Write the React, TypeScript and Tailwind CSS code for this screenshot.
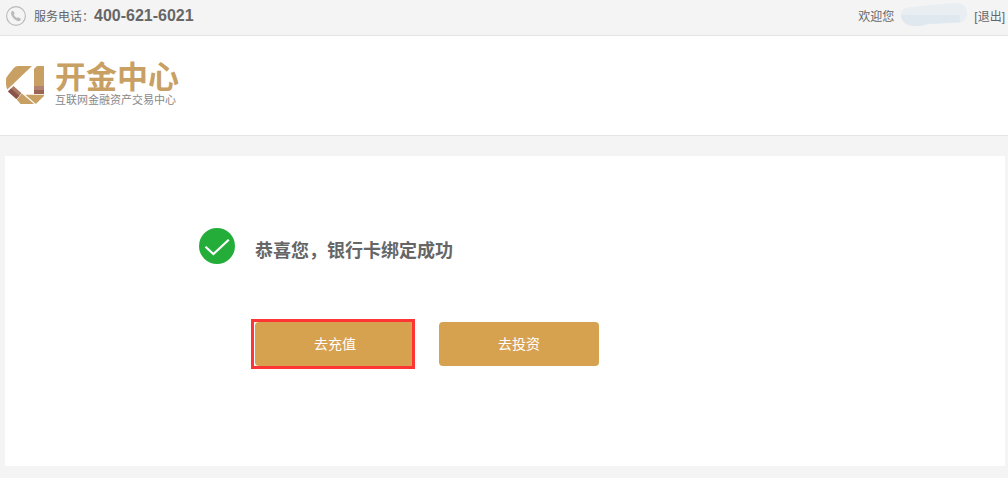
import React from "react";

function PhoneIcon() {
  return (
    <svg className="h-5 w-5 shrink-0" viewBox="0 0 20 20" aria-hidden="true">
      <circle cx="10" cy="10" r="9.4" fill="none" stroke="#b9b9b9" strokeWidth="1.1" />
      <path
        d="M6.3 5.1 L7.6 5.2 L8.7 7.4 L7.7 8.6 C8.3 10 9.5 11.3 10.9 12.1 L12.2 11.2 L14.7 12.7 L14.7 14 C14 15.2 12.4 15.3 11 14.7 C8.2 13.5 5.8 10.9 5.1 8.1 C4.8 6.8 5.3 5.6 6.3 5.1 Z"
        fill="#bababa"
      />
    </svg>
  );
}

function LogoMark() {
  return (
    <svg className="h-[38px] w-[38px] shrink-0" viewBox="0 0 38 38" aria-hidden="true">
      <path d="M12 0 H26 L1.4 23.6 Q0 21 0 18 V14 Q0 11.4 1.8 9.4 L7.6 2.2 Q9.4 0 12 0 Z" fill="#c8a063" />
      <path d="M7.5 20 L15.5 27.2 L10.4 33 L2 25.4 Z" fill="#a97762" />
      <path d="M5 22.6 L13.2 29.8 L10.4 33 L2 25.4 Z" fill="#8a5548" />
      <path d="M15.9 27.6 L28.2 38 H14.6 L10.8 33.4 Z" fill="#c8a063" />
      <path d="M31 0 H38 V20 H28 V3 Z" fill="#c8a063" />
      <path d="M28 20 H38 V24 H28 Z" fill="#b38270" />
      <path d="M28 24 H38 V28 H28 Z" fill="#9a6555" />
      <path d="M19.4 28.8 H38 V30 L29.8 38 Z" fill="#c8a063" />
    </svg>
  );
}

function SuccessIcon() {
  return (
    <svg className="h-9 w-9 shrink-0" viewBox="0 0 36 36" aria-hidden="true">
      <circle cx="18" cy="18" r="18" fill="#24ae39" />
      <path d="M6.5 18.8 L14.4 26 L29.8 11.8" fill="none" stroke="#fff" strokeWidth="2.2" />
    </svg>
  );
}

function HiddenName() {
  return (
    <svg className="h-6 w-[68px] shrink-0" viewBox="0 0 68 24" aria-hidden="true">
      <path d="M1 12 C1 6 6 4 13 4 C24 3 36 1 56 0 C63 0 67 4 67 10 C67 16 64 20 58 20 L28 21 C20 24 8 24 4 19 C2 17 1 15 1 12 Z" fill="#e9eef3" />
      <path d="M1 12 H60 V19 L28 21 C20 24 8 24 4 19 C2 17 1 15 1 12 Z" fill="#dfe7ef" />
    </svg>
  );
}

function ActionButton({ children }: { children: React.ReactNode }) {
  return (
    <button type="button" className="h-11 w-40 cursor-pointer rounded bg-[#d7a250] text-sm text-white">
      {children}
    </button>
  );
}

export default function App() {
  return (
    <div className="min-h-screen bg-[#f4f4f4] font-['Liberation_Sans','Noto_Sans_CJK_SC',sans-serif] text-[#666]">
      <div className="flex h-9 items-start justify-between border-b border-[#e4e4e4] pr-[3px] pl-[6px] text-xs">
        <div className="flex h-8 items-center">
          <PhoneIcon />
          <span className="ml-2 pt-0.5">服务电话：</span>
          <strong className="text-base">400-621-6021</strong>
        </div>
        <div className="flex h-8 items-center">
          <span className="pt-0.5">欢迎您</span>
          <span className="mx-[6px] pb-0.5"><HiddenName /></span>
          <a href="#logout" className="pt-0.5">[退出]</a>
        </div>
      </div>

      <header className="flex h-[100px] items-start border-b border-[#e4e4e4] bg-white px-[6px] pt-[30px]">
        <a href="#home" className="flex items-start gap-[11px]">
          <LogoMark />
          <span className="flex flex-col">
            <span className="text-[31px] leading-6 font-bold text-[#c8a063]">开金中心</span>
            <span className="text-[11px] leading-5 text-[#888]">互联网金融资产交易中心</span>
          </span>
        </a>
      </header>

      <main className="pt-5 pr-[3px] pb-3 pl-[5px]">
        <section className="bg-white px-[194px] pt-[72px] pb-[100px]">
          <div className="flex items-center gap-5">
            <SuccessIcon />
            <h1 className="pt-[10px] text-lg leading-[26px] font-bold">恭喜您，银行卡绑定成功</h1>
          </div>
          <div className="mt-[58px] ml-14 flex gap-6">
            <div className="relative flex">
              <ActionButton>去充值</ActionButton>
              <span className="pointer-events-none absolute -inset-y-[3px] right-0 -left-1 border-3 border-[#ff3434]" />
            </div>
            <ActionButton>去投资</ActionButton>
          </div>
        </section>
      </main>
    </div>
  );
}
